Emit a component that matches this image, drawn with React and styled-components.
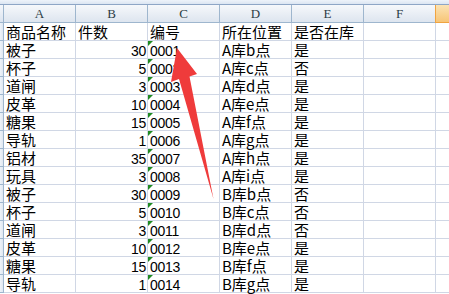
import React from 'react';
import styled, { createGlobalStyle } from 'styled-components';

const GlobalStyle = createGlobalStyle`
  html, body {
    margin: 0;
    padding: 0;
    background: #ffffff;
    overflow: hidden;
  }
`;

const rows = [
  ['被子', '30', '0001', 'A库b点', '是'],
  ['杯子', '5', '0002', 'A库c点', '否'],
  ['道闸', '3', '0003', 'A库d点', '是'],
  ['皮革', '10', '0004', 'A库e点', '是'],
  ['糖果', '15', '0005', 'A库f点', '是'],
  ['导轨', '1', '0006', 'A库g点', '是'],
  ['铝材', '35', '0007', 'A库h点', '是'],
  ['玩具', '3', '0008', 'A库i点', '是'],
  ['被子', '30', '0009', 'B库b点', '否'],
  ['杯子', '5', '0010', 'B库c点', '否'],
  ['道闸', '3', '0011', 'B库d点', '否'],
  ['皮革', '10', '0012', 'B库e点', '是'],
  ['糖果', '15', '0013', 'B库f点', '是'],
  ['导轨', '1', '0014', 'B库g点', '是'],
];

const Sheet = styled.div`
  position: relative;
  width: 449px;
  height: 294px;
  overflow: hidden;
  background: #ffffff;
`;

const TopStrip = styled.div`
  height: 4px;
  background: linear-gradient(#eef3fa, #dbe5f2);
  border-bottom: 1px solid #8ea6c6;
`;

const Grid = styled.div`
  display: grid;
  grid-template-columns: 4px repeat(7, 72px);
  grid-auto-rows: 18px;
`;

const Corner = styled.div`
  box-sizing: border-box;
  background: linear-gradient(#f4f7fb, #dce4ef);
  border-right: 1px solid #9eb6ce;
  border-bottom: 1px solid #9eb6ce;
`;

const ColHead = styled.div`
  box-sizing: border-box;
  display: flex;
  align-items: center;
  justify-content: center;
  font-family: 'Liberation Serif', 'DejaVu Serif', serif;
  font-size: 13px;
  color: #2b3d45;
  background: ${(p) =>
    p.$active
      ? 'linear-gradient(#fbe3b4, #f7c577)'
      : 'linear-gradient(#f6f8fb, #dde5ef)'};
  border-right: 1px solid ${(p) => (p.$active ? '#f0a441' : '#9eb6ce')};
  border-bottom: 1px solid ${(p) => (p.$active ? '#f0a441' : '#9eb6ce')};
  border-left: ${(p) => (p.$active ? '1px solid #f0a441' : 'none')};
  margin-left: ${(p) => (p.$active ? '-1px' : '0')};
`;

const RowHead = styled.div`
  box-sizing: border-box;
  background: linear-gradient(90deg, #eef3f9, #dfe7f1);
  border-right: 1px solid #9eb6ce;
  border-bottom: 1px solid #9eb6ce;
`;

const Cell = styled.div`
  position: relative;
  box-sizing: border-box;
  padding: 0 ${(p) => (p.$align === 'right' ? '1px' : '2px')};
  border-right: 1px solid #d0d7e5;
  border-bottom: 1px solid #d0d7e5;
  font-family: 'Noto Sans CJK SC', 'Noto Sans', sans-serif;
  font-size: 15px;
  line-height: 17px;
  color: #000000;
  text-align: ${(p) => p.$align || 'left'};
  white-space: nowrap;
`;

const TextFlag = styled.span`
  position: absolute;
  left: 0;
  top: 0;
  width: 0;
  height: 0;
  border-top: 5px solid #1f8a22;
  border-right: 5px solid transparent;
`;

const Digits = styled.span`
  font-family: 'Liberation Sans', 'Noto Sans', sans-serif;
  font-size: 14px;
  letter-spacing: -0.3px;
`;

const Arrow = styled.svg`
  position: absolute;
  left: 0;
  top: 0;
  pointer-events: none;
`;

const columns = ['A', 'B', 'C', 'D', 'E', 'F'];

export default function App() {
  return (
    <>
      <GlobalStyle />
      <Sheet>
        <TopStrip />
        <Grid>
          <Corner />
          {columns.map((c) => (
            <ColHead key={c}>{c}</ColHead>
          ))}
          <ColHead $active />

          <RowHead />
          <Cell>商品名称</Cell>
          <Cell>件数</Cell>
          <Cell>编号</Cell>
          <Cell>所在位置</Cell>
          <Cell>是否在库</Cell>
          <Cell />
          <Cell />

          {rows.map((r, i) => (
            <React.Fragment key={i}>
              <RowHead />
              <Cell>{r[0]}</Cell>
              <Cell $align="right">
                <Digits>{r[1]}</Digits>
              </Cell>
              <Cell>
                <TextFlag />
                <Digits>{r[2]}</Digits>
              </Cell>
              <Cell>{r[3]}</Cell>
              <Cell>{r[4]}</Cell>
              <Cell />
              <Cell />
            </React.Fragment>
          ))}
        </Grid>

        <Arrow width="449" height="294" viewBox="0 0 449 294">
          <polygon
            points="177,48 197,74 189.5,76.5 213.5,199 179,79 171,82"
            fill="#ef3b3b"
          />
        </Arrow>
      </Sheet>
    </>
  );
}
